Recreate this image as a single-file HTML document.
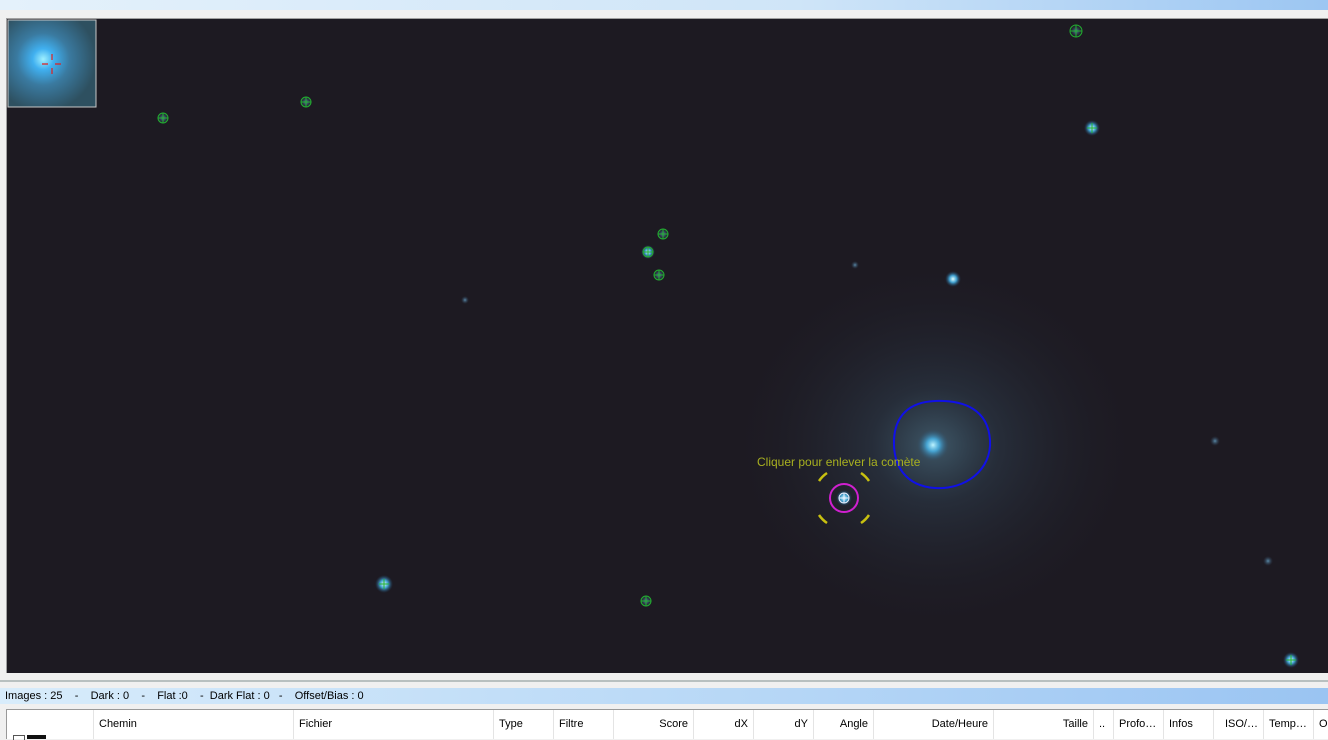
<!DOCTYPE html>
<html><head><style>
body{margin:0;width:1328px;height:738px;overflow:hidden;background:#f0f0f0;font-family:"Liberation Sans",sans-serif;position:relative}
.top{position:absolute;left:0;top:0;width:1328px;height:10px;background:linear-gradient(90deg,#e4f1fb,#cfe5f8 60%,#9cc6f2)}
.img{position:absolute;left:6px;top:18px;width:1322px;height:654px;border-top:1px solid #a0a0a0;border-left:1px solid #a0a0a0}
.sep{position:absolute;left:0;top:680px;width:1328px;height:2px;background:#b8c0c0}
.status{position:absolute;left:0;top:688px;width:1328px;height:16px;background:linear-gradient(90deg,#d8ecfb,#b5d6f6 60%,#9ac4f2);font-size:11px;line-height:16px;color:#000;white-space:pre;padding-left:5px;box-sizing:border-box}
.tbl{position:absolute;left:6px;top:709px;width:1322px;height:29px;background:#fff;border-left:1px solid #999;border-top:1px solid #999;font-size:11px}
.c{position:absolute;top:0;height:29px;line-height:28px;border-right:1px solid #e4e4e4;box-sizing:border-box;padding:0 5px;white-space:nowrap;overflow:hidden}
.r{text-align:right}
</style></head><body>
<div class="top"></div>
<div class="img">
<svg width="1322" height="654" viewBox="7 19 1322 654" style="display:block">
<defs>
<radialGradient id="halo" cx="0.5" cy="0.5" r="0.5"><stop offset="0" stop-color="#5a8aa0" stop-opacity="0.55"/><stop offset="0.3" stop-color="#3c5a70" stop-opacity="0.3"/><stop offset="1" stop-color="#1c1a24" stop-opacity="0"/></radialGradient>
<radialGradient id="core" cx="0.5" cy="0.5" r="0.5"><stop offset="0" stop-color="#bff4ff"/><stop offset="0.4" stop-color="#49b8ee" stop-opacity="0.8"/><stop offset="1" stop-color="#2a5070" stop-opacity="0"/></radialGradient>
<radialGradient id="star" cx="0.5" cy="0.5" r="0.5"><stop offset="0" stop-color="#e0ffff"/><stop offset="0.45" stop-color="#40a0d0"/><stop offset="1" stop-color="#204060" stop-opacity="0"/></radialGradient>
<radialGradient id="dim" cx="0.5" cy="0.5" r="0.5"><stop offset="0" stop-color="#5a8aa8"/><stop offset="1" stop-color="#2a3a50" stop-opacity="0"/></radialGradient>
<radialGradient id="thumb" cx="0.4" cy="0.45" r="0.6"><stop offset="0" stop-color="#9ff0ff"/><stop offset="0.2" stop-color="#40b0f0"/><stop offset="0.5" stop-color="#3a7aa0"/><stop offset="1" stop-color="#2e5060"/></radialGradient>
</defs>
<rect x="7" y="19" width="1322" height="654" fill="#1d1a22"/>
<ellipse cx="935" cy="445" rx="210" ry="190" fill="url(#halo)"/>
<circle cx="933" cy="445" r="16" fill="url(#core)"/>
<g fill="url(#star)">
<circle cx="384" cy="584" r="9"/><circle cx="1092" cy="128" r="8"/><circle cx="953" cy="279" r="8"/><circle cx="1291" cy="660" r="8"/><circle cx="648" cy="252" r="7"/><circle cx="844" cy="498" r="8"/>
</g>
<g fill="url(#dim)">
<circle cx="163" cy="118" r="6"/><circle cx="306" cy="102" r="6"/><circle cx="663" cy="234" r="6"/><circle cx="659" cy="275" r="6"/><circle cx="646" cy="601" r="6"/><circle cx="1076" cy="31" r="6"/><circle cx="1215" cy="441" r="5"/><circle cx="1268" cy="561" r="5"/><circle cx="465" cy="300" r="4"/><circle cx="855" cy="265" r="4"/>
</g>
<g stroke="#22b030" stroke-width="1" fill="none">
<g transform="translate(163,118)"><circle r="5"/><path d="M-5 0H5M0-5V5"/></g>
<g transform="translate(306,102)"><circle r="5"/><path d="M-5 0H5M0-5V5"/></g>
<g transform="translate(663,234)"><circle r="5"/><path d="M-5 0H5M0-5V5"/></g>
<g transform="translate(648,252)"><circle r="5"/><path d="M-5 0H5M0-5V5"/></g>
<g transform="translate(659,275)"><circle r="5"/><path d="M-5 0H5M0-5V5"/></g>
<g transform="translate(646,601)"><circle r="5"/><path d="M-5 0H5M0-5V5"/></g>
<g transform="translate(1076,31)"><circle r="6"/><path d="M-6 0H6M0-6V6"/></g>
<g transform="translate(1092,128)"><path d="M-5 0H5M0-5V5"/></g>
<g transform="translate(384,584)"><path d="M-5 0H5M0-5V5"/></g>
<g transform="translate(1291,660)"><path d="M-5 0H5M0-5V5"/></g>
</g>
<path d="M935 401 C965 400 988 410 990 440 C992 470 965 490 935 488 C905 486 893 465 894 440 C895 415 910 402 935 401Z" stroke="#1010e8" stroke-width="2" fill="none"/>
<circle cx="844" cy="498" r="14" stroke="#d020d0" stroke-width="2" fill="none"/>
<g transform="translate(844,498)" stroke="#e8f0ff" stroke-width="1" fill="none"><circle r="5"/><path d="M-5 0H5M0-5V5"/></g>
<g stroke="#c8c010" stroke-width="2.5" fill="none" transform="translate(844,498)">
<path d="M-25 -17 A30 30 0 0 1 -17 -25"/><path d="M17 -25 A30 30 0 0 1 25 -17"/><path d="M-25 17 A30 30 0 0 0 -17 25"/><path d="M17 25 A30 30 0 0 0 25 17"/>
</g>
<text x="757" y="466" font-family="Liberation Sans" font-size="12" fill="#a8b020">Cliquer pour enlever la comète</text>
<rect x="8" y="20" width="88" height="87" fill="url(#thumb)" stroke="#c8c8c8" stroke-width="1"/>
<g stroke="#e02020" stroke-width="1.2"><path d="M42 64H48M55 64H61M52 54V60M52 68V74"/></g>
</svg>
</div>
<div class="sep"></div>
<div class="status">Images : 25    -    Dark : 0    -    Flat :0    -  Dark Flat : 0   -    Offset/Bias : 0</div>
<div class="tbl">
<div class="c" style="left:0;width:87px"></div>
<div class="c" style="left:87px;width:200px">Chemin</div>
<div class="c" style="left:287px;width:200px">Fichier</div>
<div class="c" style="left:487px;width:60px">Type</div>
<div class="c" style="left:547px;width:60px">Filtre</div>
<div class="c r" style="left:607px;width:80px">Score</div>
<div class="c r" style="left:687px;width:60px">dX</div>
<div class="c r" style="left:747px;width:60px">dY</div>
<div class="c r" style="left:807px;width:60px">Angle</div>
<div class="c r" style="left:867px;width:120px">Date/Heure</div>
<div class="c r" style="left:987px;width:100px">Taille</div>
<div class="c" style="left:1087px;width:20px">..</div>
<div class="c" style="left:1107px;width:50px">Profo…</div>
<div class="c" style="left:1157px;width:50px">Infos</div>
<div class="c r" style="left:1207px;width:50px">ISO/…</div>
<div class="c" style="left:1257px;width:50px">Temp…</div>
<div class="c" style="left:1307px;width:30px">O</div>
<div style="position:absolute;left:6px;top:25px;width:10px;height:4px;border:1px solid #555;border-bottom:none"></div>
<div style="position:absolute;left:20px;top:25px;width:19px;height:4px;background:#111"></div>
</div>
</body></html>
